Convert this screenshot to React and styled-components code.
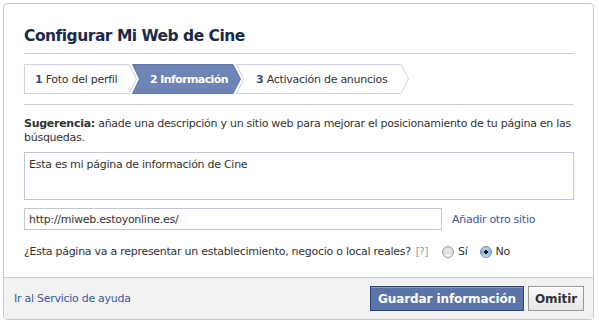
import styled, { createGlobalStyle } from 'styled-components';

const GlobalStyle = createGlobalStyle`
  body {
    margin: 0;
    background: #fff;
    font-family: "DejaVu Sans", "Noto Sans", sans-serif;
    font-size: 11px;
    letter-spacing: -0.27px;
    color: #333;
  }
`;

const Page = styled.div`
  padding: 3px;
`;

const Dialog = styled.div`
  width: 591px;
  height: 317px;
  box-sizing: border-box;
  border: 1px solid #c9c9c9;
  border-radius: 4px;
  display: flex;
  flex-direction: column;
  overflow: hidden;
  background: #fff;
`;

const Body = styled.div`
  padding: 0 19px 0 20px;
`;

const Title = styled.h2`
  margin: 0;
  padding: 22px 0 7px;
  font-size: 15.5px;
  letter-spacing: -0.5px;
  line-height: 20px;
  font-weight: bold;
  color: #1c2a47;
  border-bottom: 1px solid #ccc;
`;

const Steps = styled.div`
  display: flex;
  padding: 10px 0;
  border-bottom: 1px solid #ccc;
`;

const Step = styled.div`
  position: relative;
  height: 30px;
  width: ${(p) => p.$w}px;
  margin-left: ${(p) => (p.$first ? 0 : -5)}px;
  display: flex;
  align-items: center;
  padding-left: ${(p) => p.$pad}px;
  box-sizing: border-box;
  color: ${(p) => (p.$active ? '#fff' : '#333')};
  font-weight: ${(p) => (p.$active ? 'bold' : 'normal')};
  letter-spacing: ${(p) => (p.$active ? '-0.6px' : '-0.27px')};
  white-space: nowrap;
`;

const StepShape = styled.svg`
  position: absolute;
  inset: 0;
  width: 100%;
  height: 100%;
  overflow: visible;
`;

const StepLabel = styled.span`
  position: relative;
`;

const StepNum = styled.b`
  color: ${(p) => (p.$active ? '#fff' : '#3b4f7d')};
`;

const Hint = styled.p`
  margin: 12px 0 0;
  line-height: 14px;
`;

const TextArea = styled.div`
  margin-top: 7px;
  height: 48px;
  width: 550px;
  box-sizing: border-box;
  border: 1px solid #bdc7d8;
  padding: 5px 4px;
  line-height: 14px;
`;

const UrlRow = styled.div`
  display: flex;
  align-items: center;
  margin-top: 8px;
`;

const Input = styled.div`
  width: 418px;
  height: 22px;
  box-sizing: border-box;
  border: 1px solid #bdc7d8;
  padding: 0 4px;
  display: flex;
  align-items: center;
`;

const Link = styled.a`
  color: #3b5998;
  text-decoration: none;
  margin-left: ${(p) => p.$ml || 0}px;
`;

const Question = styled.div`
  display: flex;
  align-items: center;
  margin-top: 15px;
  line-height: 14px;
`;

const Help = styled.span`
  color: #999;
  margin-left: 5px;
  font-size: 10px;
`;

const Radio = styled.span`
  width: 12px;
  height: 12px;
  box-sizing: border-box;
  border-radius: 50%;
  border: 1px solid ${(p) => (p.$on ? '#6f8bb5' : '#9a9a9a')};
  background: ${(p) =>
    p.$on
      ? 'radial-gradient(circle at 50% 50%, #1a1a1a 0 1.6px, transparent 2.1px), linear-gradient(#cfe3fb, #8fb4e6 55%, #c5dcf8)'
      : 'linear-gradient(#f4f4f4, #dcdcdc 60%, #fff)'};
  margin-left: ${(p) => p.$ml}px;
  margin-right: 4px;
  box-shadow: inset 0 1px 1px rgba(0, 0, 0, 0.15);
`;

const Footer = styled.div`
  margin-top: auto;
  height: 41px;
  background: #f2f2f2;
  border-top: 1px solid #ccc;
  display: flex;
  align-items: center;
  padding: 0 9px 0 10px;
`;

const Buttons = styled.div`
  margin-left: auto;
  display: flex;
  gap: 4px;
`;

const Button = styled.button`
  height: 25px;
  box-sizing: border-box;
  padding: 0 ${(p) => (p.$primary ? 7 : 6)}px;
  font-family: "DejaVu Sans", sans-serif;
  font-size: 12px;
  letter-spacing: -0.1px;
  font-weight: bold;
  border: 1px solid ${(p) => (p.$primary ? '#29447e' : '#999')};
  background: ${(p) => (p.$primary ? '#5b74a8' : 'linear-gradient(#fafafa, #e6e6e6)')};
  color: ${(p) => (p.$primary ? '#fff' : '#333')};
  box-shadow: ${(p) => (p.$primary ? 'inset 0 1px 0 #8a9cc2' : 'inset 0 1px 0 #fff')};
`;

const steps = [
  { n: 1, label: 'Foto del perfil', w: 113, pad: 11 },
  { n: 2, label: 'Información', w: 109, pad: 18, active: true },
  { n: 3, label: 'Activación de anuncios', w: 173, pad: 20 },
];

function shapePoints(w, first) {
  const pts = [`0.5,0.5`, `${w - 8},0.5`, `${w - 0.5},15`, `${w - 8},29.5`, `0.5,29.5`];
  if (!first) pts.push('7.5,15');
  return pts.join(' ');
}

export default function App() {
  return (
    <Page>
      <GlobalStyle />
      <Dialog>
        <Body>
          <Title>Configurar Mi Web de Cine</Title>
          <Steps>
            {steps.map((s, i) => (
              <Step key={s.n} $w={s.w} $pad={s.pad} $first={i === 0} $active={s.active}>
                <StepShape viewBox={`0 0 ${s.w} 30`}>
                  <polygon
                    points={shapePoints(s.w, i === 0)}
                    fill={s.active ? '#6d84b4' : '#fff'}
                    stroke={s.active ? '#5f76a8' : '#c9d2e3'}
                    strokeWidth="1"
                  />
                </StepShape>
                <StepLabel>
                  <StepNum $active={s.active}>{s.n}</StepNum> {s.label}
                </StepLabel>
              </Step>
            ))}
          </Steps>
          <Hint>
            <b>Sugerencia:</b> añade una descripción y un sitio web para mejorar el
            posicionamiento de tu página en las búsquedas.
          </Hint>
          <TextArea>Esta es mi página de información de Cine</TextArea>
          <UrlRow>
            <Input>http://miweb.estoyonline.es/</Input>
            <Link href="#" $ml={10}>Añadir otro sitio</Link>
          </UrlRow>
          <Question>
            ¿Esta página va a representar un establecimiento, negocio o local reales?
            <Help>[?]</Help>
            <Radio $ml={14} />
            Sí
            <Radio $ml={12} $on />
            No
          </Question>
        </Body>
        <Footer>
          <Link href="#">Ir al Servicio de ayuda</Link>
          <Buttons>
            <Button $primary>Guardar información</Button>
            <Button>Omitir</Button>
          </Buttons>
        </Footer>
      </Dialog>
    </Page>
  );
}
